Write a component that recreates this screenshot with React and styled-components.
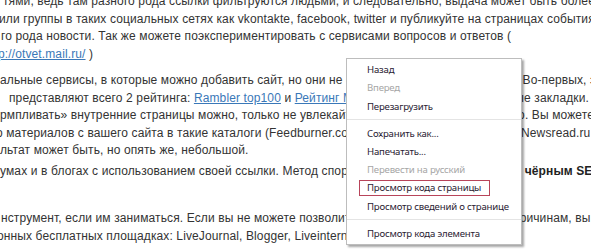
import React from "react";
import styled, { createGlobalStyle } from "styled-components";

const GlobalStyle = createGlobalStyle`
  html, body { margin: 0; padding: 0; background: #fff; }
`;

const Viewport = styled.div`
  position: relative;
  width: 591px;
  height: 249px;
  overflow: hidden;
  background: #fff;
`;

const Article = styled.div`
  margin-top: -7px;
  font-family: "Liberation Sans", Arial, sans-serif;
  font-size: 12px;
  letter-spacing: 0.12px;
  color: #333;
`;

const Paragraph = styled.div`
  margin-top: ${(p) => p.$gap || 0}px;
`;

const Line = styled.div`
  height: 17.5px;
  line-height: 17.5px;
  white-space: nowrap;
  text-indent: ${(p) => p.$indent || 0}px;
`;

const Link = styled.a`
  color: #3a78b8;
  text-decoration: underline;
`;

const Strong = styled.b`
  color: #222;
  font-weight: bold;
`;

const Menu = styled.div`
  position: absolute;
  left: 346px;
  top: 58px;
  width: 174px;
  padding: 2px 0 1px;
  background: #fff;
  border: 1px solid #bdbdbd;
  box-shadow: 2px 2px 2px rgba(0, 0, 0, 0.35);
  font-family: "Noto Sans", "Open Sans", sans-serif;
  font-size: 9.6px;
  letter-spacing: -0.2px;
`;

const Item = styled.div`
  height: 18.3px;
  display: flex;
  align-items: center;
  padding-left: 20px;
  color: ${(p) => (p.$disabled ? "#a6a6a6" : "#2a2233")};
`;

const Label = styled.span`
  display: inline-block;
  line-height: 14px;
  ${(p) =>
    p.$focused
      ? `
    border: 1px solid #b8445a;
    padding: 0 8px 0 7px;
    margin-left: -8px;
  `
      : ""}
`;

const Separator = styled.div`
  height: 1px;
  margin: 3px 0 4.5px;
  background: #e4e4e4;
`;

export default function App() {
  return (
    <>
      <GlobalStyle />
      <Viewport>
        <Article>
          <Paragraph>
            <Line $indent={3}>
              тями, ведь там разного рода ссылки фильтруются людьми, и следовательно, выдача может быть более
              качественной.
            </Line>
            <Line $indent={-1}>
              или группы в таких социальных сетях как vkontakte, facebook, twitter и публикуйте на страницах события
            </Line>
            <Line $indent={1}>
              го рода новости. Так же можете поэкспериментировать с сервисами вопросов и ответов (
            </Line>
            <Line $indent={-2}>
              <Link>p://otvet.mail.ru/</Link> )
            </Line>
          </Paragraph>
          <Paragraph $gap={9}>
            <Line>
              альные сервисы, в которые можно добавить сайт, но они не очень популярны в интернете. Во-первых, это
            </Line>
            <Line $indent={9}>
              представляют всего 2 рейтинга: <Link>Rambler top100</Link> и <Link>Рейтинг Mail.ru</Link>, а также есть
              социальные закладки. Это
            </Line>
            <Line>
              рмпливать» внутренние страницы можно, только не увлекайтесь этим чересчур, это вредно. Вы можете
              добавить
            </Line>
            <Line $indent={-4}>
              о материалов с вашего сайта в такие каталоги (Feedburner.com, Subscribe.ru, Google News, Newsread.ru
            </Line>
            <Line>льтат может быть, но опять же, небольшой.</Line>
          </Paragraph>
          <Paragraph $gap={3.75}>
            <Line>
              умах и в блогах с использованием своей ссылки. Метод спорный, так как он граничит уже с{" "}
              <Strong>чёрным SEO</Strong>
            </Line>
          </Paragraph>
          <Paragraph $gap={29.5}>
            <Line $indent={1}>
              нструмент, если им заниматься. Если вы не можете позволить себе те ссылки по разным причинам, вы
            </Line>
            <Line $indent={-3}>онных бесплатных площадках: LiveJournal, Blogger, Liveinternet и т.д.</Line>
          </Paragraph>
        </Article>
        <Menu>
          <Item>
            <Label>Назад</Label>
          </Item>
          <Item $disabled>
            <Label>Вперед</Label>
          </Item>
          <Item>
            <Label>Перезагрузить</Label>
          </Item>
          <Separator />
          <Item>
            <Label>Сохранить как...</Label>
          </Item>
          <Item>
            <Label>Напечатать...</Label>
          </Item>
          <Item $disabled>
            <Label>Перевести на русский</Label>
          </Item>
          <Item>
            <Label $focused>Просмотр кода страницы</Label>
          </Item>
          <Item>
            <Label>Просмотр сведений о странице</Label>
          </Item>
          <Separator />
          <Item>
            <Label>Просмотр кода элемента</Label>
          </Item>
        </Menu>
      </Viewport>
    </>
  );
}
